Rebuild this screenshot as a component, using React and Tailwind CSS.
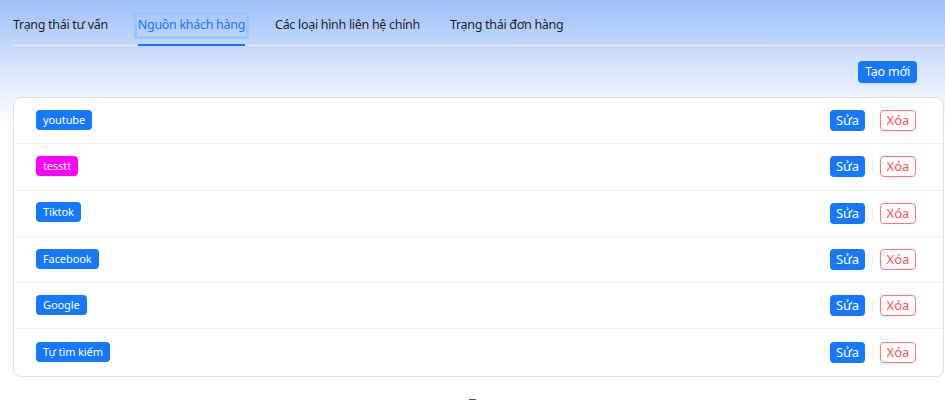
import { useState } from 'react';

const tabs = ['Trạng thái tư vấn', 'Nguồn khách hàng', 'Các loại hình liên hệ chính', 'Trạng thái đơn hàng'];

const sources = [
  { name: 'youtube', color: 'bg-[#1677ff]' },
  { name: 'tesstt', color: 'bg-[#ff00ff]' },
  { name: 'Tiktok', color: 'bg-[#1677ff]' },
  { name: 'Facebook', color: 'bg-[#1677ff]' },
  { name: 'Google', color: 'bg-[#1677ff]' },
  { name: 'Tự tìm kiếm', color: 'bg-[#1677ff]' },
];

export default function App() {
  const [active, setActive] = useState(1);

  return (
    <div className="w-[945px] h-[400px] overflow-hidden bg-[linear-gradient(180deg,#9dbff9_0px,#c9dbfb_50px,#eef4fe_100px,#ffffff_130px)] font-['Noto_Sans',sans-serif] text-[rgba(0,0,0,0.88)]">
      {/* tabs */}
      <div className="ml-[13px] flex h-[46px] items-end border-b border-[#e6ecf5]">
        {tabs.map((t, i) => (
          <button
            key={t}
            onClick={() => setActive(i)}
            className={
              'relative mr-[30px] flex h-[46px] items-center pt-[6px] text-[12.5px] tracking-[-0.3px] whitespace-nowrap ' +
              (i === active ? 'text-[#1677ff]' : '')
            }
          >
            {i === active && (
              <span className="absolute left-[-4px] right-[-4px] top-[13px] h-[27px] border-[3px] border-[#91c3ff]/80 rounded-[2px]"></span>
            )}
            <span className="relative">{t}</span>
            {i === active && <span className="absolute bottom-[-1px] left-0 right-0 h-[2px] bg-[#1677ff]"></span>}
          </button>
        ))}
      </div>

      {/* toolbar */}
      <div className="flex justify-end pr-[28px] pt-[15px] pb-[14px]">
        <button className="h-[22px] px-[7px] rounded-[4px] bg-[#1677ff] text-white text-[12.5px] tracking-[-0.2px] leading-[22px] shadow-[0_2px_0_rgba(5,145,255,0.1)]">
          Tạo mới
        </button>
      </div>

      {/* list */}
      <div className="ml-[13px] mr-[1px] rounded-[8px] border border-[#e2e2e2] bg-white">
        {sources.map((s, i) => (
          <div
            key={s.name}
            className={'flex h-[46.3px] items-center pl-[22px] pr-[27px] ' + (i < sources.length - 1 ? 'border-b border-[#f0f0f0]' : '')}
          >
            <span className={'-mt-[2px] h-[20px] px-[7px] rounded-[4px] text-white text-[11px] tracking-[-0.1px] leading-[20px] ' + s.color}>
              {s.name}
            </span>
            <div className="ml-auto flex items-center">
              <button className="h-[21px] w-[35px] rounded-[4px] bg-[#1677ff] text-white text-[13px] leading-[21px]">
                Sửa
              </button>
              <span className="mx-[7px] h-[13px] w-px bg-[#eeeeee]"></span>
              <button className="h-[21px] w-[36px] rounded-[4px] border border-[#ff7875] text-[#ff4d4f] text-[13px] leading-[19px] bg-white">
                Xóa
              </button>
            </div>
          </div>
        ))}
      </div>

      <div className="mt-[22px] ml-[469px] h-[2px] w-[7px] bg-[#555]"></div>
    </div>
  );
}
